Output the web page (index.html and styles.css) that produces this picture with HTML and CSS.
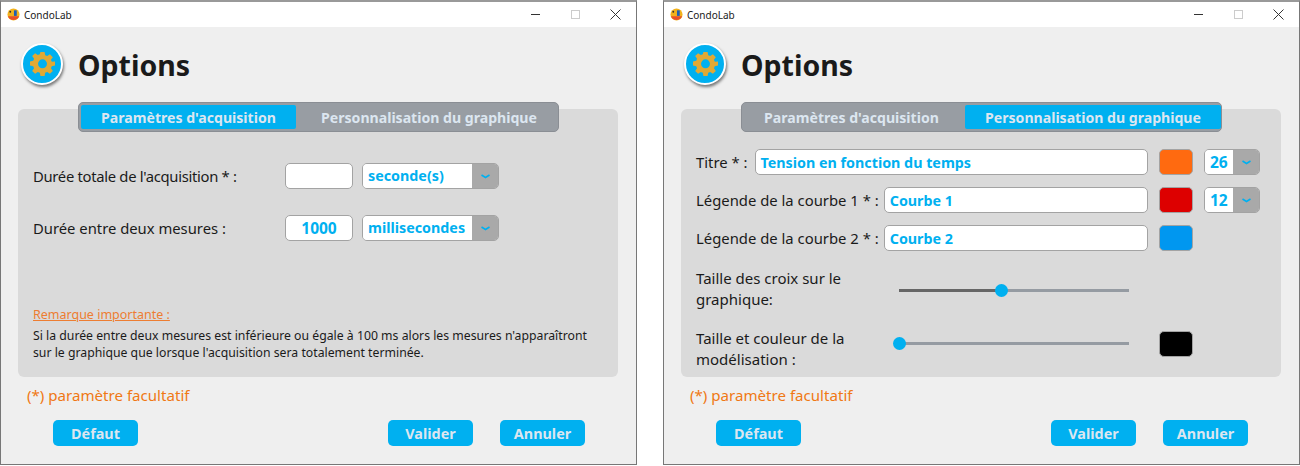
FILE: index.html
```html
<!DOCTYPE html>
<html lang="fr">
  <head>
    <meta charset="UTF-8" />
    <title>CondoLab</title>
    <link rel="stylesheet" href="styles.css">
  </head>
  <body>
    <div class="desktop">
      <!-- Onglet acquisition -->
      <div class="window">
        <div class="titlebar">
          <svg class="app-icon" viewBox="0 0 14 14"><circle cx="7" cy="7" r="6.5" fill="#f2b21c"/><path d="M1 9a6.5 6.5 0 0 0 12 0z" fill="#e8502a"/><rect x="7.5" y="2.5" width="3" height="6" fill="#1f5fb4"/><circle cx="3.5" cy="4" r="1" fill="#333"/></svg>
          <span class="app-name">CondoLab</span>
          <div class="win-controls">
            <span class="win-btn"><span class="win-min"></span></span>
            <span class="win-btn"><span class="win-max"></span></span>
            <span class="win-btn"><svg width="11" height="11" viewBox="0 0 11 11"><path d="M.5.5l10 10M10.5.5l-10 10" stroke="#333" fill="none"/></svg></span>
          </div>
        </div>
        <div class="header">
          <div class="gear-badge">
            <svg width="25" height="25" viewBox="0 0 24 24"><path fill="#e0a935" fill-rule="evenodd" d="M10 1h4l.6 3.100 1.900.8 2.600-1.800 2.800 2.800-1.800 2.600.8 1.900L24 10v4l-3.100.6-.8 1.900 1.800 2.600-2.800 2.800-2.600-1.800-1.900.8L14 24h-4l-.6-3.100-1.900-.8-2.600 1.800-2.800-2.800 1.800-2.600-.8-1.900L0 14v-4l3.100-.6.8-1.900L2.100 4.900l2.800-2.800 2.600 1.800 1.900-.8zM12 8a4.300 4.300 0 1 0 0 8.600A4.300 4.300 0 0 0 12 8z"/></svg>
          </div>
          <h1 class="title">Options</h1>
        </div>
        <div class="panel">
          <div class="tabs">
            <div class="tab tab-active">Paramètres d'acquisition</div>
            <div class="tab">Personnalisation du graphique</div>
          </div>
          <div class="acq-form">
            <div class="acq-row">
              <span class="acq-label acq-label-tight">Durée totale de l'acquisition * :</span>
              <div class="field field-num"></div>
              <div class="select select-unit"><span class="select-value">seconde(s)</span><span class="select-arrow"><svg width="9" height="5" viewBox="0 0 9 5"><path d="M.5 1l4 2.500 4-2.500" fill="none" stroke="#00b0f0" stroke-width="1.600"/></svg></span></div>
            </div>
            <div class="acq-row">
              <span class="acq-label">Durée entre deux mesures :</span>
              <div class="field field-num">1000</div>
              <div class="select select-unit"><span class="select-value">millisecondes</span><span class="select-arrow"><svg width="9" height="5" viewBox="0 0 9 5"><path d="M.5 1l4 2.500 4-2.500" fill="none" stroke="#00b0f0" stroke-width="1.600"/></svg></span></div>
            </div>
          </div>
          <div class="remark">
            <span class="remark-title">Remarque importante : </span>
            <p class="remark-text">Si la durée entre deux mesures est inférieure ou égale à 100 ms alors les mesures n'apparaîtront<br>sur le graphique que lorsque l'acquisition sera totalement terminée.</p>
          </div>
        </div>
        <div class="optional">(*) paramètre facultatif</div>
        <div class="actions">
          <button class="btn">Défaut</button>
          <button class="btn btn-right">Valider</button>
          <button class="btn">Annuler</button>
        </div>
      </div>

      <!-- Onglet graphique -->
      <div class="window">
        <div class="titlebar">
          <svg class="app-icon" viewBox="0 0 14 14"><circle cx="7" cy="7" r="6.5" fill="#f2b21c"/><path d="M1 9a6.5 6.5 0 0 0 12 0z" fill="#e8502a"/><rect x="7.5" y="2.5" width="3" height="6" fill="#1f5fb4"/><circle cx="3.5" cy="4" r="1" fill="#333"/></svg>
          <span class="app-name">CondoLab</span>
          <div class="win-controls">
            <span class="win-btn"><span class="win-min"></span></span>
            <span class="win-btn"><span class="win-max"></span></span>
            <span class="win-btn"><svg width="11" height="11" viewBox="0 0 11 11"><path d="M.5.5l10 10M10.5.5l-10 10" stroke="#333" fill="none"/></svg></span>
          </div>
        </div>
        <div class="header">
          <div class="gear-badge">
            <svg width="25" height="25" viewBox="0 0 24 24"><path fill="#e0a935" fill-rule="evenodd" d="M10 1h4l.6 3.100 1.900.8 2.600-1.800 2.800 2.800-1.800 2.600.8 1.900L24 10v4l-3.100.6-.8 1.900 1.800 2.600-2.800 2.800-2.600-1.800-1.900.8L14 24h-4l-.6-3.100-1.900-.8-2.600 1.800-2.800-2.800 1.800-2.600-.8-1.900L0 14v-4l3.100-.6.8-1.900L2.100 4.900l2.800-2.800 2.600 1.800 1.900-.8zM12 8a4.300 4.300 0 1 0 0 8.600A4.300 4.300 0 0 0 12 8z"/></svg>
          </div>
          <h1 class="title">Options</h1>
        </div>
        <div class="panel">
          <div class="tabs">
            <div class="tab">Paramètres d'acquisition</div>
            <div class="tab tab-active">Personnalisation du graphique</div>
          </div>
          <div class="chart-form">
            <div class="chart-row">
              <span class="chart-label chart-label-short">Titre * :</span>
              <div class="field field-text">Tension en fonction du temps</div>
              <span class="swatch swatch-orange"></span>
              <div class="select select-size"><span class="select-value">26</span><span class="select-arrow"><svg width="9" height="5" viewBox="0 0 9 5"><path d="M.5 1l4 2.500 4-2.500" fill="none" stroke="#00b0f0" stroke-width="1.600"/></svg></span></div>
            </div>
            <div class="chart-row">
              <span class="chart-label">Légende de la courbe 1 * :</span>
              <div class="field field-text">Courbe 1</div>
              <span class="swatch swatch-red"></span>
              <div class="select select-size"><span class="select-value">12</span><span class="select-arrow"><svg width="9" height="5" viewBox="0 0 9 5"><path d="M.5 1l4 2.500 4-2.500" fill="none" stroke="#00b0f0" stroke-width="1.600"/></svg></span></div>
            </div>
            <div class="chart-row">
              <span class="chart-label">Légende de la courbe 2 * :</span>
              <div class="field field-text">Courbe 2</div>
              <span class="swatch swatch-blue"></span>
              <span class="select-gap"></span>
            </div>
            <div class="slider-row slider-row-first">
              <span class="slider-label">Taille des croix sur le graphique:</span>
              <div class="slider"><div class="slider-fill" style="width: 102px"></div><span class="slider-thumb" style="left: 102px"></span></div>
            </div>
            <div class="slider-row slider-row-second">
              <span class="slider-label">Taille et couleur de la modélisation :</span>
              <div class="slider"><span class="slider-thumb" style="left: 0"></span></div>
              <span class="swatch swatch-black"></span>
            </div>
          </div>
        </div>
        <div class="optional">(*) paramètre facultatif</div>
        <div class="actions">
          <button class="btn">Défaut</button>
          <button class="btn btn-right">Valider</button>
          <button class="btn">Annuler</button>
        </div>
      </div>
    </div>
  </body>
</html>
```

FILE: styles.css
```css
* {
  box-sizing: border-box;
}
html,
body {
  margin: 0;
  height: 466px;
  overflow: hidden;
  background: #fff;
}
body {
  font-family: "Noto Sans", "Open Sans", sans-serif;
  color: #1a1a1a;
}
.desktop {
  display: flex;
  justify-content: space-between;
  width: 1300px;
  height: 466px;
}
.window {
  width: 637px;
  height: 465px;
  background: #efefef;
  border: 1px solid #777;
  border-top: 2px solid #999;
  display: flex;
  flex-direction: column;
}
.titlebar {
  height: 25px;
  background: #fff;
  display: flex;
  align-items: center;
  padding-left: 6px;
  flex-shrink: 0;
}
.app-icon {
  width: 13px;
  height: 13px;
  margin-right: 4px;
}
.app-name {
  font-size: 10px;
}
.win-controls {
  margin-left: auto;
  display: flex;
  padding-right: 1px;
}
.win-btn {
  width: 40px;
  height: 24px;
  display: flex;
  align-items: center;
  justify-content: center;
}
.win-min {
  width: 9px;
  height: 1px;
  background: #333;
}
.win-max {
  width: 9px;
  height: 9px;
  border: 1px solid #ccc;
}
.header {
  display: flex;
  align-items: center;
  padding-left: 20px;
  height: 73px;
  flex-shrink: 0;
}
.gear-badge {
  width: 42px;
  height: 42px;
  border-radius: 50%;
  background: #00b0f0;
  border: 2px solid #fff;
  box-shadow: 1px 2px 3px rgba(0, 0, 0, 0.5);
  display: flex;
  align-items: center;
  justify-content: center;
}
.title {
  margin: 2px 0 0 15px;
  font-size: 28.500px;
  font-weight: 700;
  line-height: 40px;
}
.panel {
  margin: 9px 0 0 17px;
  width: 600px;
  height: 268px;
  background: #dadada;
  border-radius: 6px;
  display: flex;
  flex-direction: column;
}
.tabs {
  margin: -7px 0 0 60px;
  width: 481px;
  height: 30px;
  padding: 2px;
  background: #989da3;
  border: 1px solid #8a8e94;
  border-radius: 5px;
  display: flex;
  flex-shrink: 0;
}
.tab {
  height: 24px;
  font-size: 14.100px;
  font-weight: 700;
  color: #dce6f0;
  line-height: 26px;
  text-align: center;
  border-radius: 2px;
}
.tab:first-child {
  width: 215px;
}
.tab:last-child {
  flex: 1;
  margin-left: 6px;
}
.tab:last-child.tab-active {
  flex: 0 0 256px;
  margin-right: -2px;
}
.tab-active {
  background: #00b0f0;
}
.acq-form {
  padding: 31px 0 0 15px;
  display: flex;
  flex-direction: column;
  gap: 26px;
}
.acq-row {
  display: flex;
  align-items: center;
  height: 26px;
}
.acq-label {
  width: 252px;
  font-size: 14.800px;
  white-space: nowrap;
}
.acq-label-tight {
  letter-spacing: -0.3px;
}
.field {
  height: 26px;
  background: #fff;
  border: 1px solid #a3a3a3;
  border-radius: 5px;
  color: #00b0f0;
  font-size: 14.300px;
  font-weight: 700;
  line-height: 26px;
  flex-shrink: 0;
}
.field-num {
  width: 68px;
  text-align: center;
  margin-right: 9px;
  font-size: 15.500px;
  line-height: 24px;
}
.field-text {
  flex: 1;
  padding-left: 5px;
}
.select {
  height: 26px;
  display: flex;
  border: 1px solid #a3a3a3;
  border-radius: 5px;
  overflow: hidden;
  flex-shrink: 0;
}
.select-value {
  flex: 1;
  background: #fff;
  color: #00b0f0;
  font-size: 14.300px;
  font-weight: 700;
  line-height: 24px;
  padding-left: 5px;
}
.select-arrow {
  background: #a9a9a9;
  display: flex;
  align-items: center;
  justify-content: center;
  width: 26px;
}
.select-unit {
  width: 137px;
}
.select-size {
  width: 56px;
  margin-left: 11px;
}
.select-size .select-value {
  font-size: 15.500px;
}
.select-gap {
  width: 56px;
  margin-left: 11px;
  flex-shrink: 0;
}
.remark {
  margin-top: auto;
  padding: 0 0 16px 15px;
}
.remark-title {
  font-size: 12.500px;
  color: #ed7d31;
  text-decoration: underline;
}
.remark-text {
  margin: 3px 0 0;
  font-size: 12.250px;
  line-height: 17px;
  white-space: nowrap;
}
.chart-form {
  padding: 17px 21px 0 15px;
  display: flex;
  flex-direction: column;
  gap: 12px;
}
.chart-row {
  display: flex;
  align-items: center;
  height: 26px;
}
.chart-label {
  font-size: 14.850px;
  margin-right: 5px;
  white-space: nowrap;
}
.chart-label-short {
  margin-right: 7px;
}
.swatch {
  width: 34px;
  height: 26px;
  border: 1px solid #a3a3a3;
  border-radius: 5px;
  margin-left: 11px;
  flex-shrink: 0;
}
.swatch-orange {
  background: #ff6a10;
}
.swatch-red {
  background: #dd0000;
}
.swatch-blue {
  background: #0097f0;
}
.swatch-black {
  background: #000;
  margin-left: 30px;
  margin-top: -11px;
}
.slider-row {
  display: flex;
  align-items: center;
  height: 42px;
}
.slider-row-first {
  margin-top: 5px;
}
.slider-row-first .slider {
  margin-top: 3px;
}
.slider-row-second {
  margin-top: 6px;
}
.slider-row-second .slider {
  margin-top: -11px;
}
.slider-label {
  width: 203px;
  font-size: 15px;
  line-height: 21px;
  flex-shrink: 0;
}
.slider {
  position: relative;
  width: 230px;
  height: 3px;
  background: #959ba2;
}
.slider-fill {
  height: 3px;
  background: #666;
}
.slider-thumb {
  position: absolute;
  top: -5px;
  width: 13px;
  height: 13px;
  margin-left: -6px;
  border-radius: 50%;
  background: #00b0f0;
}
.optional {
  margin: 8px 0 0 26px;
  font-size: 15.100px;
  line-height: 20px;
  color: #f07814;
}
.actions {
  display: flex;
  padding: 15px 51px 0 52px;
  gap: 27px;
}
.btn {
  width: 85px;
  height: 26px;
  border: 0;
  border-radius: 5px;
  background: #00b0f0;
  color: #dce6f0;
  font-family: inherit;
  font-size: 14.400px;
  font-weight: 700;
  padding: 1px 0 0;
}
.btn-right {
  margin-left: auto;
}
```
